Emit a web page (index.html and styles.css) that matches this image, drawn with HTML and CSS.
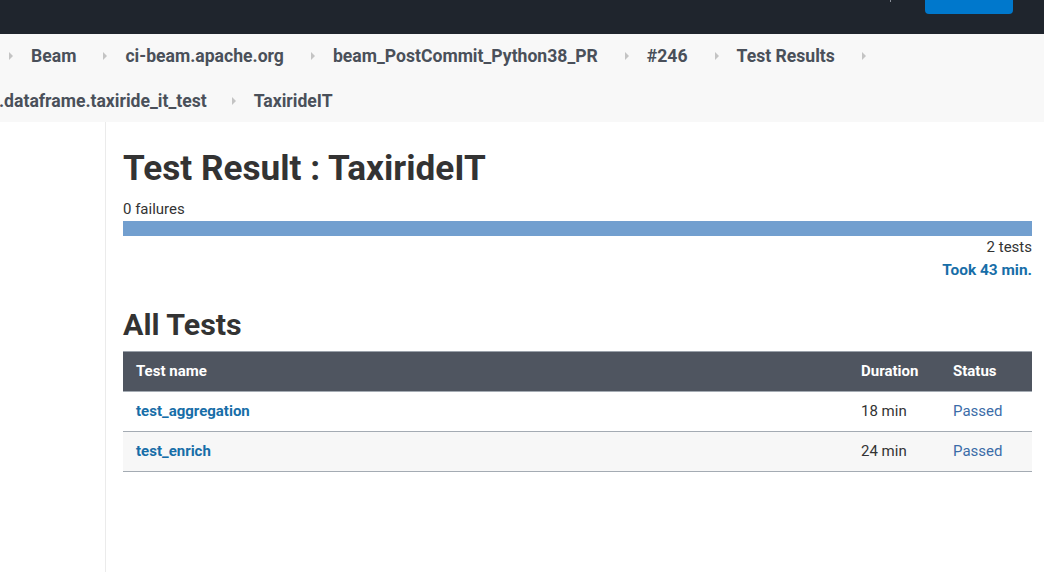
FILE: index.html
```html
<!DOCTYPE html>
<html>
<head>
<meta charset="utf-8">
<link rel="stylesheet" href="styles.css">
</head>
<body>
<header class="topbar">
  <span class="top-mark"></span>
  <a class="top-button" href="#"></a>
</header>
<nav class="breadcrumbs">
  <ol class="crumb-row first">
    <li class="crumb"><span class="sep"></span><a href="#">Beam</a></li>
    <li class="crumb"><span class="sep"></span><a href="#">ci-beam.apache.org</a></li>
    <li class="crumb"><span class="sep"></span><a href="#">beam_PostCommit_Python38_PR</a></li>
    <li class="crumb"><span class="sep"></span><a href="#">#246</a></li>
    <li class="crumb"><span class="sep"></span><a href="#">Test Results</a></li>
    <li class="crumb"><span class="sep"></span></li>
  </ol>
  <ol class="crumb-row second">
    <li class="crumb"><a href="#">.dataframe.taxiride_it_test</a></li>
    <li class="crumb"><span class="sep"></span><a href="#">TaxirideIT</a></li>
  </ol>
</nav>
<div class="page">
  <aside class="side-panel"></aside>
  <main class="main-panel">
    <h1 class="title">Test Result : TaxirideIT</h1>
    <div class="failures">0 failures</div>
    <div class="result-bar"></div>
    <div class="summary">2 tests</div>
    <div class="summary took-line"><a class="took" href="#">Took 43 min.</a></div>
    <h2 class="section-title">All Tests</h2>
    <table class="tests">
      <thead>
        <tr><th class="name-col">Test name</th><th class="dur-col">Duration</th><th class="status-col">Status</th></tr>
      </thead>
      <tbody>
        <tr><td><a class="test-link" href="#">test_aggregation</a></td><td>18 min</td><td><span class="status">Passed</span></td></tr>
        <tr class="alt"><td><a class="test-link" href="#">test_enrich</a></td><td>24 min</td><td><span class="status">Passed</span></td></tr>
      </tbody>
    </table>
  </main>
</div>
</body>
</html>
```
FILE: styles.css
```css
* { box-sizing: border-box; }
html, body { margin: 0; padding: 0; }
body {
  font-family: Roboto, "Liberation Sans", sans-serif;
  color: #333;
  background: #fff;
  width: 1044px;
  height: 572px;
  overflow: hidden;
}
a { text-decoration: none; }

.topbar {
  height: 34px;
  background: #1f252d;
  display: flex;
  align-items: flex-start;
  justify-content: flex-end;
  padding-right: 31px;
}
.top-mark {
  width: 1px;
  height: 2px;
  background: #8a9099;
  margin-right: 34px;
}
.top-button {
  display: block;
  width: 88px;
  height: 14px;
  background: #0078cc;
  border-radius: 0 0 4px 4px;
}

.breadcrumbs {
  background: #f8f8f8;
  height: 88px;
}
.crumb-row {
  list-style: none;
  margin: 0;
  padding: 0;
  height: 43px;
  display: flex;
  align-items: center;
}
.crumb-row.first { padding-left: 9px; }
.crumb-row.second { margin-top: 2px; }
.crumb {
  display: flex;
  align-items: center;
  margin-right: 27px;
}
.crumb a {
  font-size: 17.6px;
  font-weight: 700;
  color: #4a505a;
}
.sep {
  width: 0;
  height: 0;
  border-top: 4px solid transparent;
  border-bottom: 4px solid transparent;
  border-left: 4px solid #c4c4c4;
  margin-right: 18px;
}
.crumb-row.second .crumb:first-child { margin-left: -1px; margin-right: 25px; }

.page {
  display: flex;
  height: 450px;
}
.side-panel {
  width: 106px;
  border-right: 1px solid #ebebeb;
  flex: none;
}
.main-panel {
  flex: 1;
  padding: 25px 12px 0 17px;
}
.title {
  margin: 0;
  font-size: 35.2px;
  line-height: 43px;
  font-weight: 700;
  color: #333;
}
.failures {
  margin-top: 9px;
  font-size: 15px;
  line-height: 21px;
  color: #333;
}
.result-bar {
  height: 15px;
  background: #729fcf;
  margin-top: 1px;
}
.summary {
  text-align: right;
  font-size: 15px;
  line-height: 21px;
  color: #333;
  margin-top: 1px;
}
.took-line { margin-top: 2px; }
.took {
  color: #176ea8;
  font-weight: 700;
  font-size: 15.4px;
}
.section-title {
  margin: 26px 0 0 0;
  font-size: 30.4px;
  line-height: 36px;
  font-weight: 700;
  color: #333;
}
.tests {
  margin-top: 8px;
  width: 100%;
  border-collapse: collapse;
  font-size: 15px;
}
.tests th, .tests td {
  text-align: left;
  height: 40px;
  padding: 0 13px 1px 13px;
}
.tests thead tr {
  background: #4f5560;
  border-top: 1px solid #9aa1aa;
}
.tests th {
  color: #fff;
  font-weight: 700;
}
.tests tbody tr { border-top: 1px solid #a4abb3; }
.tests tbody tr:last-child { border-bottom: 1px solid #a4abb3; }
.tests tbody tr.alt { background: #f7f7f7; }
.dur-col, .status-col { width: 92px; }
.test-link {
  color: #176ea8;
  font-weight: 700;
}
.tests td { color: #333; }
.status { color: #3b6ca8; }
```
